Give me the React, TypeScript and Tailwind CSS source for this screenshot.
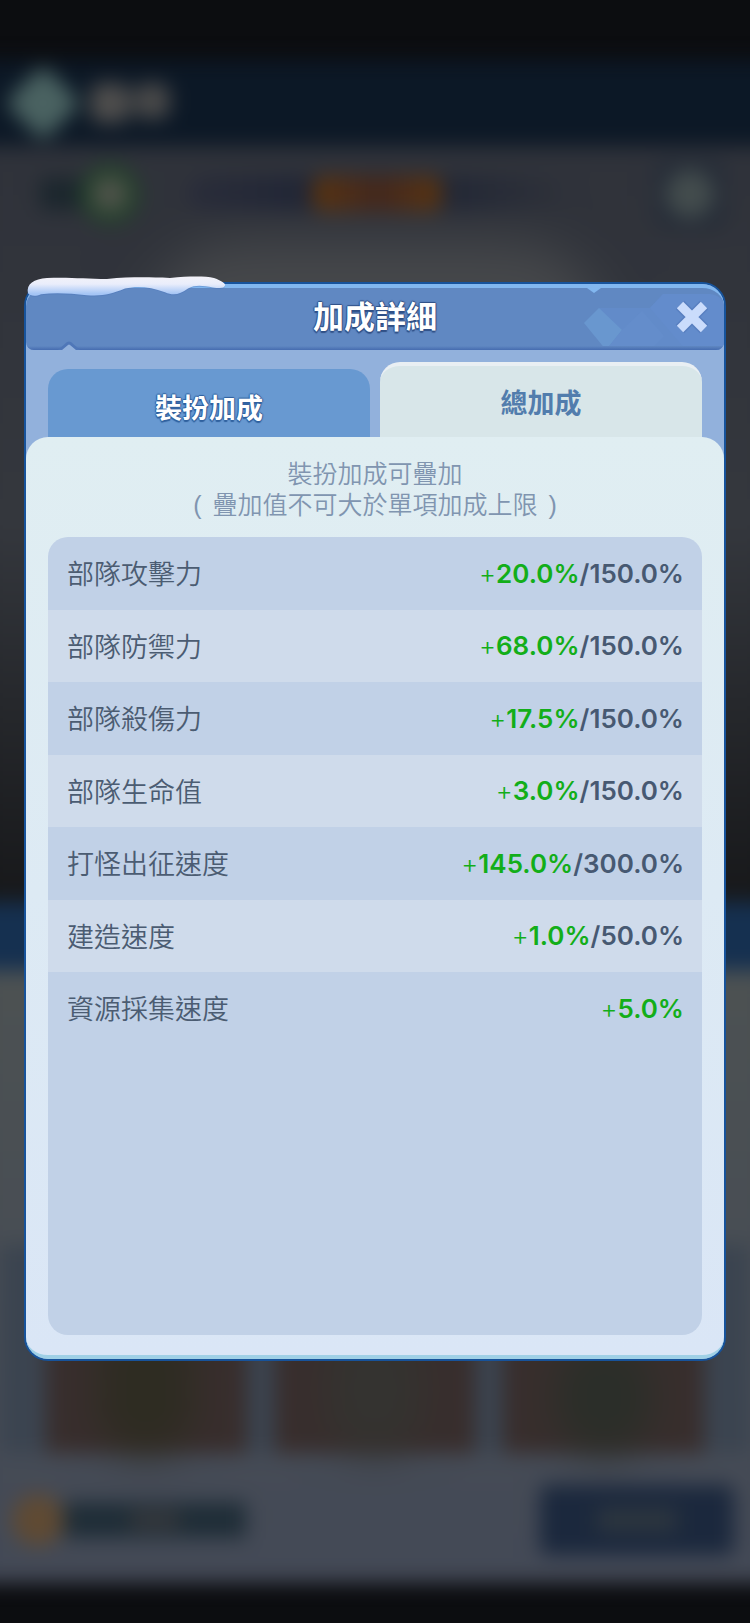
import { useState } from "react";
import clsx from "clsx";

type Bonus = {
  name: string;
  value: string;
  limit?: string;
};

const BONUSES: Bonus[] = [
  { name: "部隊攻擊力", value: "20.0%", limit: "150.0%" },
  { name: "部隊防禦力", value: "68.0%", limit: "150.0%" },
  { name: "部隊殺傷力", value: "17.5%", limit: "150.0%" },
  { name: "部隊生命值", value: "3.0%", limit: "150.0%" },
  { name: "打怪出征速度", value: "145.0%", limit: "300.0%" },
  { name: "建造速度", value: "1.0%", limit: "50.0%" },
  { name: "資源採集速度", value: "5.0%" },
];

const TABS = ["裝扮加成", "總加成"];

/* Dimmed, out-of-focus game screen behind the dialog */
function Backdrop() {
  return (
    <div
      aria-hidden="true"
      className="absolute inset-0 overflow-hidden bg-[#0c0d10]"
    >
      <div className="flex h-full flex-col pt-[60px] pb-10 blur-[10px]">
        <div className="-mx-6 flex h-[86px] shrink-0 items-center gap-5 bg-[#0c1826] px-6">
          <div className="ml-4 size-[54px] rotate-45 rounded-lg bg-[#4a6261]" />
          <div className="flex gap-1">
            <div className="size-10 rounded-xl bg-[#4f4e4d]" />
            <div className="size-9 rounded-xl bg-[#4a4a4a]" />
          </div>
        </div>

        <div className="-mx-6 flex h-[756px] shrink-0 flex-col bg-linear-to-b from-[#2f323a] via-[#34373d] to-[#17181a] px-6">
          <div className="flex h-24 items-center justify-between pr-6 pl-10">
            <div className="flex items-center">
              <div className="h-8 w-10 bg-[#1b262d]" />
              <div className="size-[60px] rounded-full bg-[#22422a] p-3">
                <div className="size-9 rounded-full bg-[#4e524a]" />
              </div>
            </div>
            <div className="mr-10 flex h-9 w-[380px] justify-center rounded-full bg-linear-to-r from-[#2a2d3a] via-[#1b2133] to-[#2f323a]">
              <div className="w-[130px] rounded-xl bg-linear-to-r from-[#5a340e] via-[#43271c] to-[#5a340e]" />
            </div>
            <div className="size-[72px] rounded-2xl bg-[#262d38] p-3">
              <div className="size-12 rounded-full bg-[#434c4d]" />
            </div>
          </div>
          <div className="mx-auto h-24 w-[460px] rounded-t-full bg-[#46484b] blur-xl" />
        </div>

        <div className="-mx-6 h-[68px] shrink-0 bg-[#153050]" />

        <div className="-mx-6 flex grow flex-col justify-end bg-linear-to-b from-[#4c5152] to-[#434956] px-6">
          <div className="flex gap-7 bg-[#3b4450] px-[46px]">
            <div className="flex h-52 flex-1 items-end justify-center bg-[#382e2d]">
              <div className="h-32 w-24 rounded-full bg-[#2e2c22] blur-lg" />
            </div>
            <div className="flex h-52 flex-1 items-end justify-center bg-[#382e2d]">
              <div className="h-32 w-24 rounded-full bg-[#343330] blur-lg" />
            </div>
            <div className="flex h-52 flex-1 items-end justify-center bg-[#382e2d]">
              <div className="h-28 w-24 rounded-full bg-[#2b2e29] blur-lg" />
            </div>
          </div>
          <div className="flex h-[130px] items-center justify-between pt-1 pr-4 pl-3">
            <div className="flex items-center">
              <div className="size-[52px] rounded-full bg-[#5f4a33]" />
              <div className="flex h-9 w-[182px] items-center justify-center bg-[#1f2d37]">
                <div className="h-5 w-12 bg-[#34373b]" />
              </div>
            </div>
            <div className="flex h-[70px] w-[194px] items-center justify-center rounded-lg bg-[#1b283d]">
              <div className="h-6 w-20 bg-[#2d363e]" />
            </div>
          </div>
        </div>
      </div>
    </div>
  );
}

function SnowCap() {
  return (
    <svg
      aria-hidden="true"
      className="absolute -top-2 -left-px"
      width="202"
      height="24"
      viewBox="0 0 202 25"
      preserveAspectRatio="none"
    >
      <defs>
        <linearGradient id="snow" x1="0" y1="0" x2="0" y2="1">
          <stop offset="0" stopColor="#f3f2f8" />
          <stop offset="0.4" stopColor="#e9edfb" />
          <stop offset="0.9" stopColor="#a5c5f5" />
        </linearGradient>
      </defs>
      <path
        d="M3 18C1 8 9 3 22 2C45 1 60 3 82 3C105 1 120 1 145 2C165 0 180 0 189 2C197 5 201 8 200 10C199 13 195 13 188 12C178 10 170 9 163 13C155 19 149 21 140 17C125 11 112 10 100 13C86 19 78 21 62 20C45 18 30 17 16 19C9 22 5 20 3 18Z"
        transform="translate(0 1)"
        fill="#4a74b8"
        opacity="0.35"
      />
      <path
        d="M3 18C1 8 9 3 22 2C45 1 60 3 82 3C105 1 120 1 145 2C165 0 180 0 189 2C197 5 201 8 200 10C199 13 195 13 188 12C178 10 170 9 163 13C155 19 149 21 140 17C125 11 112 10 100 13C86 19 78 21 62 20C45 18 30 17 16 19C9 22 5 20 3 18Z"
        fill="url(#snow)"
      />
    </svg>
  );
}

function TitleBar() {
  return (
    <header className="relative flex h-[66px] items-center justify-center overflow-hidden rounded-t-[22px] rounded-b-lg border-t-4 border-[#82b7ef] bg-[#6088c2] pb-[10px]">
      {/* Ice facets */}
      <svg
        aria-hidden="true"
        className="absolute top-0 right-0"
        width="144"
        height="62"
        viewBox="0 0 144 62"
      >
        <path d="M7 0H21L14 5Z" fill="#82b7ef" />
        <path d="M19 20H70L83 6H130Q144 8 144 20V62H25Z" fill="#628bc9" />
        <path d="M70 20L83 6H130Q144 8 144 20V62H106Z" fill="#638ccc" />
        <path d="M4 35L19 20L42 42L26 62Z" fill="#6997cf" />
        <path d="M42 42L62 23L84 48L70 62H26Z" fill="#648dcb" />
      </svg>
      {/* Lower edge with a chip broken out of it */}
      <div className="absolute inset-x-0 bottom-0 h-1 bg-linear-to-b from-[#6088c2] to-[#466cb0]" />
      <svg
        aria-hidden="true"
        className="absolute bottom-0 left-8"
        width="22"
        height="9"
        viewBox="0 0 22 9"
      >
        <path d="M0 9L9 1Q11 0 13 1L22 9Z" fill="#4f77b8" />
        <path d="M4 9L10 4Q11 3 12 4L18 9Z" fill="#92b1dc" />
      </svg>
      <h1 className="text-[31px] leading-none font-bold text-white [text-shadow:0_2px_1px_#2f4f86,1px_0_1px_#2f4f86,-1px_0_1px_#2f4f86,0_-1px_1px_#2f4f86]">
        加成詳細
      </h1>
      <button
        type="button"
        aria-label="關閉"
        className="absolute top-0 right-[14px] flex h-[58px] items-center"
      >
        <svg width="36" height="36" viewBox="0 0 36 36" strokeLinecap="butt">
          <path d="M6 6L30 30M30 6L6 30" stroke="#587fc0" strokeWidth="12" />
          <path d="M6 6L30 30M30 6L6 30" stroke="#cadcfc" strokeWidth="9" />
        </svg>
      </button>
    </header>
  );
}

export default function App() {
  const [active, setActive] = useState(1);

  return (
    <div
      lang="zh-Hant"
      className="relative min-h-screen px-6 pt-[282px] pb-[262px] font-['Noto_Sans_CJK_TC',sans-serif]"
    >
      <Backdrop />

      <main className="relative rounded-[24px] border-2 border-[#17539b] bg-[#92b1dc]">
        <TitleBar />
        <SnowCap />

        <div
          role="tablist"
          className="flex h-[87px] items-end gap-[10px] px-[22px]"
        >
          {TABS.map((tab, i) => (
            <button
              key={tab}
              type="button"
              role="tab"
              aria-selected={active === i}
              onClick={() => setActive(i)}
              className={clsx(
                "flex-1 rounded-t-[20px] text-[27px] leading-none font-bold",
                active === i
                  ? "h-[75px] border-t-4 border-[#e9eff3] bg-[#d8e6e9] text-[#527dad]"
                  : "h-[68px] bg-[#6899d1] pt-1.5 text-white [text-shadow:0_2px_1px_#2f609e,1px_0_1px_#2f609e,-1px_0_1px_#2f609e,0_-1px_1px_#2f609e]"
              )}
            >
              {tab}
            </button>
          ))}
        </div>

        <section className="rounded-[22px] border-b-4 border-[#9fd0e6] bg-linear-to-b from-[#e0eef2] to-[#dae6f6] px-[22px] pt-[22px] pb-5">
          <p className="mb-4 text-center font-['Liberation_Sans','Noto_Sans_CJK_TC',sans-serif] text-[25px] leading-[31px] font-[350] text-[#8095b0]">
            裝扮加成可疊加
            <br />
            <span className="pr-1">(</span> 疊加值不可大於單項加成上限{" "}
            <span className="pl-1">)</span>
          </p>

          <div className="min-h-[798px] overflow-hidden rounded-[20px] bg-[#c1d1e7]">
            <table className="w-full">
              <tbody>
                {BONUSES.map((bonus) => (
                  <tr
                    key={bonus.name}
                    className="odd:h-[73px] even:h-[72px] even:bg-[#cfdbeb]"
                  >
                    <th
                      scope="row"
                      className="pb-0.5 pl-[19px] text-left text-[27px] leading-none font-[350] text-[#4b5c72]"
                    >
                      {bonus.name}
                    </th>
                    <td className="pr-[18px] text-right font-['Inter','Noto_Sans_CJK_TC',sans-serif] text-[26px] leading-none font-semibold text-[#475972]">
                      <span className="text-[#13ae19]">
                        <span className="font-light">+</span>
                        {bonus.value}
                      </span>
                      {bonus.limit && `/${bonus.limit}`}
                    </td>
                  </tr>
                ))}
              </tbody>
            </table>
          </div>
        </section>
      </main>
    </div>
  );
}
